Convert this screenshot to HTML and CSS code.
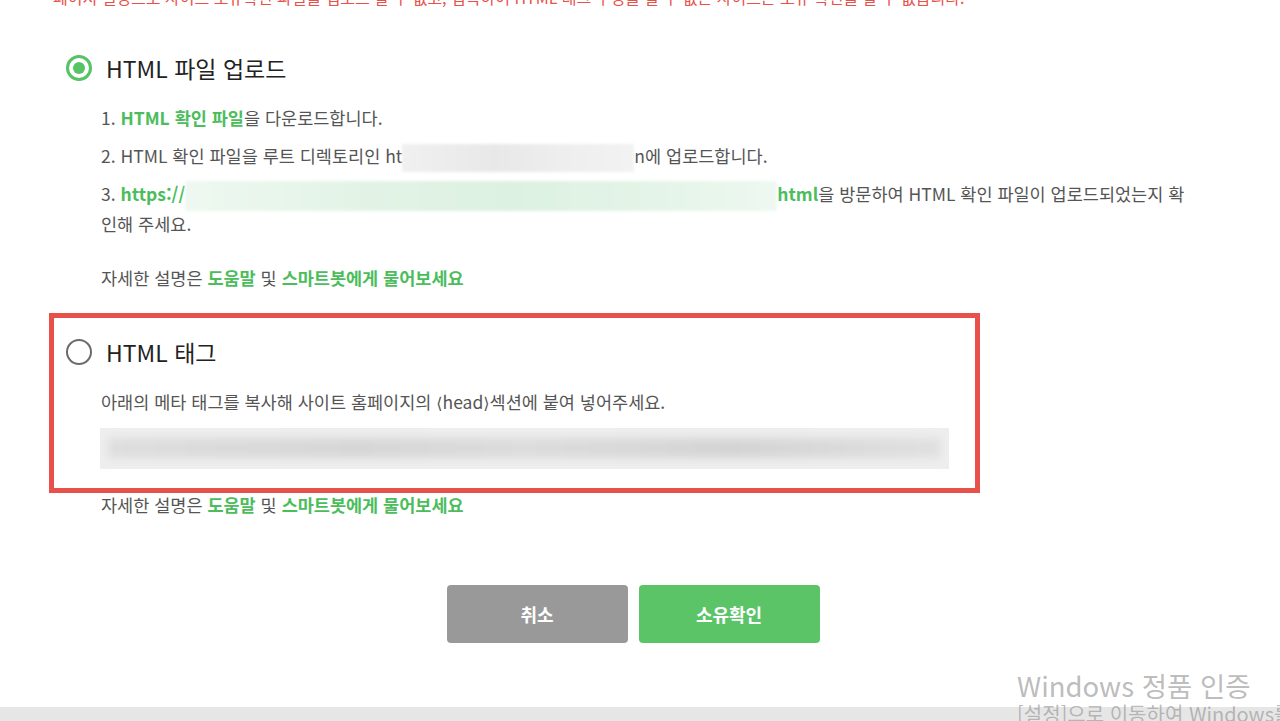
FILE: index.html
```html
<!DOCTYPE html>
<html lang="ko">
<head>
	<meta charset="utf-8">
	<title>사이트 소유확인</title>
	<link rel="stylesheet" href="styles.css">
</head>
<body>
	<div class="page">
		<p class="notice">페이지 설정으로 사이트 소유확인 파일을 업로드 할 수 없고, 접속하여 HTML 태그 수정을 할 수 없는 사이트는 소유 확인을 할 수 없습니다.</p>

		<div class="option">
			<div class="option-head">
				<span class="radio checked"></span>
				<span class="option-title">HTML 파일 업로드</span>
			</div>
			<ol class="steps">
				<li>1. <a class="link">HTML 확인 파일</a>을 다운로드합니다.</li>
				<li>2. HTML 확인 파일을 루트 디렉토리인 ht<span class="masked gray"></span>n에 업로드합니다.</li>
				<li>3. <a class="link">https://<span class="masked green"></span>html</a>을 방문하여 HTML 확인 파일이 업로드되었는지 확인해 주세요.</li>
			</ol>
		</div>
		<p class="help">자세한 설명은 <a class="link">도움말</a> 및 <a class="link">스마트봇에게 물어보세요</a></p>

		<div class="option highlight">
			<div class="option-head">
				<span class="radio"></span>
				<span class="option-title">HTML 태그</span>
			</div>
			<p class="desc">아래의 메타 태그를 복사해 사이트 홈페이지의 <span class="angle">⟨</span>head<span class="angle">⟩</span>섹션에 붙여 넣어주세요.</p>
			<div class="meta-box"><span class="meta-blur"></span></div>
		</div>
		<p class="help">자세한 설명은 <a class="link">도움말</a> 및 <a class="link">스마트봇에게 물어보세요</a></p>

		<div class="actions">
			<button class="btn cancel">취소</button>
			<button class="btn confirm">소유확인</button>
		</div>
	</div>
	<div class="bottom-bar"></div>
	<div class="watermark">
		<div class="wm-title">Windows 정품 인증</div>
		<div class="wm-sub">[설정]으로 이동하여 Windows를 정품 인증합니다.</div>
	</div>
</body>
</html>
```

FILE: styles.css
```css
* {
	box-sizing: border-box;
}
html, body {
	margin: 0;
	height: 721px;
	overflow: hidden;
	background: #fff;
	font-family: "Noto Sans CJK KR", "Noto Sans", sans-serif;
	color: #555;
	position: relative;
}
.page {
	display: flow-root;
	padding-left: 49px;
	height: 707px;
}
.notice {
	margin: -13px 0 0 4px;
	height: 20px;
	font-size: 16px;
	line-height: 20px;
	color: #e8514a;
	white-space: nowrap;
}
.option {
	margin-top: 22px;
	width: 1160px;
	border: 5px solid transparent;
	padding: 14px 0 19px 12px;
}
.option.highlight {
	width: 931px;
	border-color: #e8514a;
	margin-top: 0;
}
.option-head {
	display: flex;
	align-items: center;
	height: 40px;
}
.radio {
	width: 26px;
	height: 26px;
	border-radius: 50%;
	border: 2px solid #6b6b6b;
	margin-right: 14px;
	position: relative;
}
.radio.checked {
	border: 3px solid #57c266;
}
.radio.checked::after {
	content: "";
	position: absolute;
	left: 4px;
	top: 4px;
	width: 12px;
	height: 12px;
	border-radius: 50%;
	background: #57c266;
}
.option-title {
	font-size: 23px;
	color: #222;
	line-height: 40px;
}
.steps {
	list-style: none;
	margin: 15px 0 0 35px;
	padding: 0;
	width: 1088px;
	font-size: 17.5px;
	line-height: 30px;
}
.steps li + li {
	margin-top: 8px;
}
.link {
	color: #4cbd5c;
	font-weight: bold;
}
.masked {
	display: inline-block;
	vertical-align: middle;
	height: 28px;
	margin: -6px 0;
	filter: blur(1.5px);
}
.masked.gray {
	width: 232px;
	background: linear-gradient(90deg, #f0f0f0, #e8e8e8 40%, #eeeeee 70%, #f2f2f2);
}
.masked.green {
	width: 592px;
	height: 30px;
	background: linear-gradient(90deg, #eef8f0, #e2f3e6 30%, #dcf1e2 55%, #e4f4e8 80%, #eef8f0);
}
.help {
	margin: 3px 0 23px 52px;
	font-size: 17.5px;
	line-height: 24px;
}
.option.highlight + .help {
	margin-top: 0;
}
.desc {
	margin: 15px 0 0 35px;
	font-size: 17.5px;
	line-height: 30px;
}
.angle {
	font-family: "DejaVu Sans", sans-serif;
	font-size: 16px;
	line-height: 0;
}
.meta-box {
	margin: 11px 0 0 34px;
	width: 849px;
	height: 41px;
	background: #eeeeee;
	padding: 10px 8px;
}
.meta-blur {
	display: block;
	height: 20px;
	background: linear-gradient(90deg, #dedede, #d6d6d6 30%, #dcdcdc 50%, #d4d4d4 75%, #e0e0e0);
	filter: blur(4px);
}
.actions {
	display: flex;
	justify-content: center;
	gap: 11px;
	margin-top: 68px;
	padding-right: 63px;
}
.btn {
	width: 181px;
	height: 58px;
	border: 0;
	border-radius: 4px;
	color: #fff;
	font-family: inherit;
	font-size: 18px;
	font-weight: bold;
}
.btn.cancel {
	background: #999;
}
.btn.confirm {
	background: #5ac467;
}
.bottom-bar {
	height: 14px;
	background: #e6e6e6;
}
.watermark {
	position: absolute;
	left: 1017px;
	top: 667px;
	color: rgba(150, 150, 150, 0.65);
	white-space: nowrap;
}
.wm-title {
	font-size: 27.5px;
	line-height: 36px;
}
.wm-sub {
	font-size: 20px;
	line-height: 22px;
}
```
